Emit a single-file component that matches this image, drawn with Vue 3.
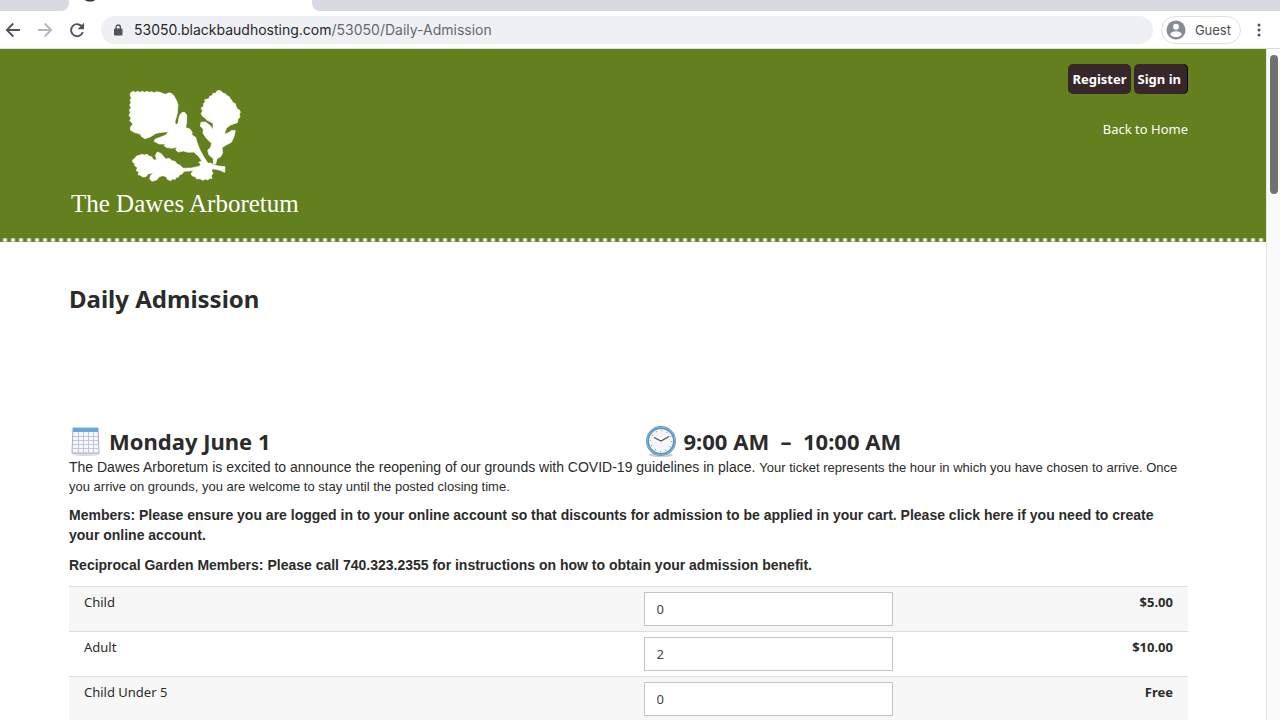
<template>
  <div class="browser">
    <div class="tab-strip">
      <div class="tab tab-left"></div>
      <div class="tab-active">
        <svg class="favicon" width="12" height="2" viewBox="0 0 12 2"><path d="M1 0h10c-2 2-8 2-10 0z" fill="#333" /></svg>
      </div>
      <div class="tab tab-right"></div>
    </div>

    <div class="toolbar">
      <button class="icon-btn" aria-label="Back">
        <svg width="16" height="16" viewBox="0 0 16 16" fill="none" stroke="#505357" stroke-width="1.8"><path d="M15 8H2M8.300 1.500L1.800 8l6.500 6.500" /></svg>
      </button>
      <button class="icon-btn" aria-label="Forward">
        <svg width="16" height="16" viewBox="0 0 16 16" fill="none" stroke="#b4b6b9" stroke-width="1.800"><path d="M1 8h13M7.700 1.500L14.200 8l-6.500 6.500" /></svg>
      </button>
      <button class="icon-btn" aria-label="Reload">
        <svg width="16" height="16" viewBox="0 0 16 16"><path d="M13.200 5A6 6 0 1 0 13.800 10" fill="none" stroke="#505357" stroke-width="1.900" /><path d="M15 .8v6.400H8.600z" fill="#505357" /></svg>
      </button>
      <div class="address">
        <svg width="10" height="12" viewBox="0 0 10 12"><rect x="1" y="4.500" width="8.500" height="7" rx="1" fill="#505357" /><path d="M3 5V3.200a2.200 2.200 0 0 1 4.400 0V5" fill="none" stroke="#505357" stroke-width="1.300" /></svg>
        <span class="url"><span class="host">53050.blackbaudhosting.com</span>/53050/Daily-Admission</span>
      </div>
      <button class="profile">
        <svg width="20" height="20" viewBox="0 0 20 20"><circle cx="10" cy="10" r="9.500" fill="#868b94" /><circle cx="10" cy="6.800" r="3" fill="#fff" /><path d="M4 14.200c1-2 3.500-3 6-3s5 1 6 3c-1.500 2-3.500 2.900-6 2.900s-4.500-.9-6-2.900z" fill="#fff" /></svg>
        Guest
      </button>
      <button class="menu-btn" aria-label="Menu">
        <svg width="4" height="14" viewBox="0 0 4 14" fill="#505357"><circle cx="2" cy="2" r="1.500" /><circle cx="2" cy="7" r="1.500" /><circle cx="2" cy="12" r="1.500" /></svg>
      </button>
    </div>

    <div class="viewport">
      <div class="page">
        <header class="site-header">
          <div class="container header-row">
            <a href="#" class="logo">
              <svg width="114" height="94" viewBox="204 27 342 282" fill="#fff" stroke="#fff" stroke-width="2" stroke-linejoin="round">
                <path d="M212 38L220 34 226 37 233 34 240 37 247 34 254 37 261 34 268 37 275 35 282 38 290 35 300 37 310 41 318 43 324 39 332 39 342 47 345 54 350 62 354 75 352 100 345 125 347 135 354 130 358 108 365 98 374 97 380 105 380 125 377 143 390 147 396 156 396 165 407 172 412 190 420 210 432 232 447 254 430 248 415 228 401 216 385 217 370 213 354 216 347 209 352 202 335 205 318 202 312 196 318 192 298 192 282 184 286 177 300 172 318 165 325 155 305 157 288 160 272 170 255 176 245 170 240 162 222 157 211 150 212 140 219 132 209 122 213 115 207 106 211 98 208 90 213 83 209 75 213 68 210 60 214 53 210 46z" />
                <path d="M477 31L484 34 488 39 496 41 501 47 508 50 511 57 516 61 517 67 526 71 528 78 530 85 538 90 541 96 538 104 540 110 534 118 532 128 522 131 510 136 499 145 493 162 506 158 515 151 526 152 522 170 514 187 497 196 486 203 488 218 482 230 471 236 467 252 460 252 460 236 447 225 443 211 452 202 455 190 440 176 429 160 430 148 421 138 423 127 436 126 450 136 459 149 459 130 448 124 440 120 436 114 429 110 423 101 428 93 423 84 431 79 431 70 436 66 434 59 447 56 449 49 456 47 459 40 467 40 471 33z" />
                <path d="M217 241L224 235 230 228 238 226 245 223 253 225 262 223 268 229 275 230 281 240 290 239 286 226 292 216 304 221 311 230 318 237 328 235 336 242 345 244 351 252 359 255 370 265 395 264 418 259 422 253 416 246 424 245 424 239 433 244 442 250 452 249 460 254 475 258 495 260 494 277 478 270 458 266 455 273 459 280 454 287 456 295 448 296 444 300 436 297 428 301 420 296 410 297 406 290 397 288 393 281 400 272 372 274 366 282 358 285 355 292 348 292 346 298 338 297 332 302 322 298 319 290 308 287 298 290 290 300 276 304 269 297 272 286 281 278 264 282 258 290 248 291 240 285 234 284 237 276 229 272 232 263 223 256 225 250 219 248z" />
              </svg>
              <span class="logo-text">The Dawes Arboretum</span>
            </a>
            <nav class="account">
              <div class="account-buttons">
                <button class="btn">Register</button>
                <button class="btn btn-sign">Sign in</button>
              </div>
              <a href="#" class="back-link">Back to Home</a>
            </nav>
          </div>
          <div class="dots"></div>
        </header>

        <main class="container">
          <h1>Daily Admission</h1>

          <div class="slot">
            <h2>
              <svg width="31" height="30" viewBox="0 0 31 30">
                <ellipse cx="17" cy="28" rx="14" ry="2" fill="#ddd" />
                <path d="M4 2h25l1 25H3z" fill="#f7f8fd" stroke="#a9acbe" />
                <path d="M4 2h25v4H4z" fill="#62a9da" />
                <path d="M4 10.500h25M4 14.500h25M3.500 18.500h26M3.500 22.500h26M9.500 6v21M14.500 6v21M19.500 6v21M24.500 6v21" stroke="#c3c6da" fill="none" />
              </svg>
              <span class="day">Monday June 1</span>
            </h2>
            <h2>
              <svg width="32" height="32" viewBox="0 0 32 32">
                <ellipse cx="16" cy="30" rx="12" ry="2" fill="#ccc" />
                <circle cx="16" cy="16" r="13.500" fill="#f5f7fb" stroke="#5a90c0" stroke-width="3" />
                <circle cx="16" cy="16" r="14" fill="none" stroke="#88b9df" />
                <circle cx="16" cy="16" r="10.500" fill="none" stroke="#9aa1ab" stroke-width="1.500" stroke-dasharray="1 4.500" />
                <path d="M9 12.500l7 3.500 8-4.500" fill="none" stroke="#555" stroke-width="1.300" />
              </svg>
              <span class="time">9:00 AM&nbsp; –&nbsp; 10:00 AM</span>
            </h2>
          </div>

          <p class="intro">The Dawes Arboretum is excited to announce the reopening of our grounds with COVID-19 guidelines in place. <span class="small">Your ticket represents the hour in which you have chosen to arrive. Once you arrive on grounds, you are welcome to stay until the posted closing time.</span></p>
          <p class="note">Members: Please ensure you are logged in to your online account so that discounts for admission to be applied in your cart. Please click here if you need to create your online account.</p>
          <p class="note">Reciprocal Garden Members: Please call 740.323.2355 for instructions on how to obtain your admission benefit.</p>

          <table class="tickets">
            <tbody>
              <tr v-for="ticket in tickets" :key="ticket.id">
                <td><label :for="ticket.id">{{ ticket.name }}</label></td>
                <td class="qty"><input :id="ticket.id" v-model="ticket.qty" type="text" /></td>
                <td class="price">{{ ticket.price }}</td>
              </tr>
            </tbody>
          </table>
        </main>
      </div>
      <div class="scrollbar"><div class="thumb"></div></div>
    </div>
  </div>
</template>

<script setup>
import { ref } from 'vue';

const tickets = ref([
  { id: 'child', name: 'Child', qty: '0', price: '$5.00' },
  { id: 'adult', name: 'Adult', qty: '2', price: '$10.00' },
  { id: 'child-under-5', name: 'Child Under 5', qty: '0', price: 'Free' },
]);
</script>

<style>
body {
  margin: 0;
  background: #fff;
}
</style>

<style scoped>
* {
  box-sizing: border-box;
}

button {
  border: 0;
  padding: 0;
  background: none;
}

svg {
  display: block;
  flex: none;
}

.browser {
  display: flex;
  flex-direction: column;
  height: 100vh;
  overflow: hidden;
  color: #2b2b2b;
  font-family: "Noto Sans", "Open Sans", sans-serif;
  font-size: 13px;
}

/* browser chrome */
.tab-strip {
  display: flex;
  flex: none;
  height: 11px;
}

.tab {
  background: #d7dae2;
}

.tab-left {
  width: 69px;
  border-bottom-right-radius: 8px;
}

.tab-active {
  width: 243px;
  padding-left: 15px;
}

.tab-right {
  flex: 1;
  border-bottom-left-radius: 8px;
}

.toolbar {
  display: flex;
  flex: none;
  align-items: center;
  height: 38px;
  padding: 0 19px 0 5px;
  border-bottom: 1px solid #dcdedc;
  font-family: Inter, "Liberation Sans", sans-serif;
}

.icon-btn {
  margin-right: 16px;
}

.address {
  display: flex;
  flex: 1;
  align-items: center;
  gap: 11px;
  height: 28px;
  margin-right: 8px;
  padding-left: 12px;
  border-radius: 14px;
  background: #eff0f3;
}

.url {
  color: #66696e;
  font-size: 14px;
}

.host {
  color: #26282b;
}

.profile {
  display: flex;
  align-items: center;
  gap: 9px;
  height: 28px;
  margin-right: 16px;
  padding: 0 9px 0 4px;
  border: 1px solid #dfe1e5;
  border-radius: 14px;
  color: #4b4e52;
  font-family: inherit;
  font-size: 13px;
}

.viewport {
  display: flex;
  flex: 1;
  min-height: 0;
}

.page {
  flex: 1;
  overflow: hidden;
}

.scrollbar {
  width: 14px;
  padding: 6px 2px 0 3px;
  border-left: 1px solid #e6e6e6;
  background: #fafafa;
}

.thumb {
  height: 139px;
  border-radius: 4px;
  background: #707070;
}

/* site */
.container {
  padding: 0 78px 0 69px;
}

.site-header {
  background: #647f1d;
}

.header-row {
  display: flex;
  justify-content: space-between;
  height: 189px;
}

.logo {
  display: flex;
  flex-direction: column;
  align-items: center;
  padding: 40px 0 0 2px;
  color: #fff;
  text-decoration: none;
}

.logo-text {
  margin-top: 6px;
  font-family: "Liberation Serif", serif;
  font-size: 25px;
  line-height: 30px;
}

.account {
  display: flex;
  flex-direction: column;
  align-items: flex-end;
  gap: 25px;
  padding-top: 15px;
}

.account-buttons {
  display: flex;
  gap: 3px;
}

.btn {
  height: 30px;
  padding: 0 4px;
  border-radius: 5px;
  background: #38272a;
  color: #fff;
  font-family: inherit;
  font-size: 13px;
  font-weight: 700;
}

.btn-sign {
  padding-right: 7px;
  box-shadow: inset -1px 0 #000;
}

.back-link {
  color: #fff;
  font-size: 13px;
  line-height: 20px;
  text-decoration: none;
}

.dots {
  height: 4px;
  background: radial-gradient(circle at center, #fff 1px, transparent 3px) 1px 0 / 8px 4px repeat-x;
}

h1 {
  margin: 41px 0 0;
  font-size: 24px;
  line-height: 32px;
}

.slot {
  display: grid;
  grid-template-columns: 1fr 1fr;
  margin-top: 109px;
}

h2 {
  display: flex;
  align-items: center;
  margin: 0;
  font-size: 22px;
  line-height: 34px;
}

h2 + h2 {
  padding-left: 16px;
}

.day {
  padding-left: 9px;
}

.time {
  padding-left: 7px;
}

p {
  margin: 0 0 10px;
  font-family: "Liberation Sans", Arial, sans-serif;
  font-size: 14px;
  line-height: 20px;
}

.intro {
  margin-bottom: 9px;
  line-height: 18px;
}

.small {
  font-size: 13px;
}

.note {
  padding-right: 10px;
  font-weight: bold;
}

.tickets {
  width: 100%;
  margin-top: 11px;
  table-layout: fixed;
  border-collapse: collapse;
}

.tickets tr {
  height: 45px;
  border-top: 1px solid #ddd;
}

.tickets tr:nth-child(odd) {
  background: #f7f7f7;
}

.tickets td {
  padding: 5px 15px 0;
  line-height: 20px;
  vertical-align: top;
}

.tickets td:first-child {
  width: 50%;
}

.qty input {
  display: block;
  width: 100%;
  height: 34px;
  padding: 0 12px;
  border: 1px solid #c4c4c4;
  background: #fff;
  color: #444;
  font-family: inherit;
  font-size: 13px;
}

.price {
  font-weight: bold;
  text-align: right;
}
</style>
